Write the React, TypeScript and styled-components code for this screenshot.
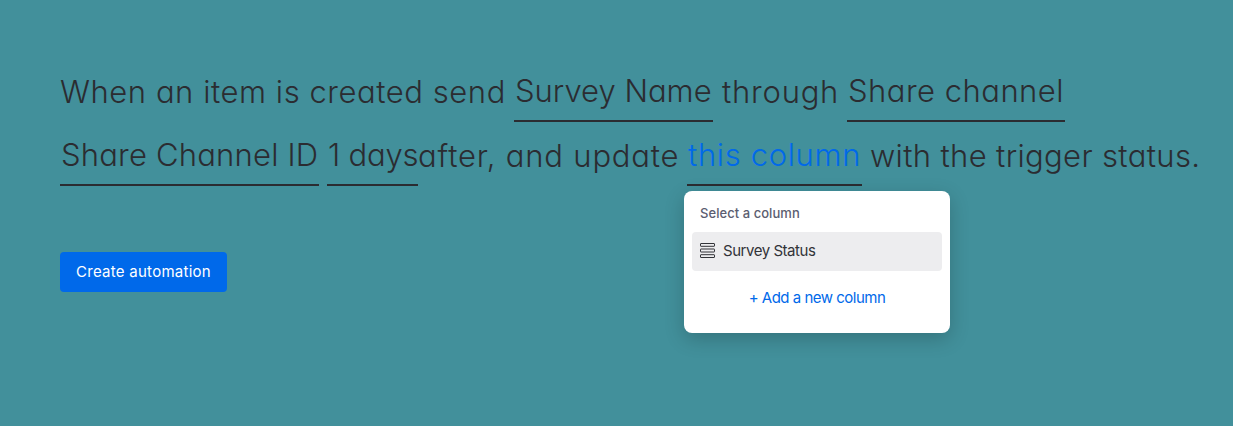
import { ReactNode } from "react";
import styled, { createGlobalStyle } from "styled-components";

const colors = {
  background: "#42909b",
  text: "#323338",
  ink: "#2b2c31",
  secondary: "#5b5d70",
  primary: "#0069ea",
  hover: "#ededef",
};

export default function App() {
  return (
    <>
      <GlobalStyle />
      <Page>
        <Sentence>
          <Line>
            <Words $width={454} $spacing={0.55}>When an item is created send</Words>
            <Field $width={199} $gap={9}>Survey Name</Field>
            <Words $width={125} $spacing={0.78}>through</Words>
            <Field $width={218} $spacing={0.48}>Share channel</Field>
          </Line>
          <Line>
            <Field $width={259} $gap={8} $spacing={0.2}>Share Channel ID</Field>
            <Field $width={91} $spacing={-0.2}>1 days</Field>
            <Words $width={269} $spacing={0.8}>after, and update</Words>
            <ColumnField>
              <Field $width={175} $gap={8} $spacing={0.65} $active>this column</Field>
              <ColumnMenu>
                <MenuItem icon={<StatusIcon />}>Survey Status</MenuItem>
              </ColumnMenu>
            </ColumnField>
            <Words $width={334} $spacing={0.35}>with the trigger status.</Words>
          </Line>
        </Sentence>
        <CreateButton>Create automation</CreateButton>
      </Page>
    </>
  );
}

function ColumnMenu({ children }: { children: ReactNode }) {
  return (
    <Menu>
      <MenuTitle>Select a column</MenuTitle>
      {children}
      <AddColumn>+ Add a new column</AddColumn>
    </Menu>
  );
}

function MenuItem({ icon, children }: { icon: ReactNode; children: ReactNode }) {
  return (
    <Item>
      {icon}
      <span>{children}</span>
    </Item>
  );
}

function StatusIcon() {
  return (
    <svg width="16" height="16" viewBox="0 0 16 16" fill="none" stroke={colors.text}>
      <rect x="0.5" y="0.5" width="14" height="2.8" rx="0.4" />
      <rect x="0.5" y="6" width="14" height="3" rx="0.4" />
      <rect x="0.5" y="11.7" width="14" height="2.8" rx="0.4" />
    </svg>
  );
}

const GlobalStyle = createGlobalStyle`
  * {
    box-sizing: border-box;
  }

  body {
    margin: 0;
    background: ${colors.background};
  }
`;

const Page = styled.main`
  height: 426px;
  padding: 58px 0 0 60px;
  overflow: hidden;

  background: ${colors.background};
  color: ${colors.ink};
`;

const Sentence = styled.div`
  font-family: "Inter", sans-serif;
  font-size: 31px;
  font-weight: 300;
  font-feature-settings: "cv11";
  white-space: nowrap;
`;

const Line = styled.div`
  display: flex;
  height: 64px;
`;

const Words = styled.span<{ $width: number; $spacing?: number }>`
  flex: none;
  width: ${({ $width }) => $width}px;

  letter-spacing: ${({ $spacing = 0 }) => $spacing}px;
  line-height: 68px;
`;

const Field = styled.span<{
  $width: number;
  $gap?: number;
  $spacing?: number;
  $active?: boolean;
}>`
  flex: none;
  display: block;
  width: ${({ $width }) => $width}px;
  height: 64px;
  margin-right: ${({ $gap = 0 }) => $gap}px;
  padding-left: 1px;
  border-bottom: 2px solid ${colors.ink};

  color: ${({ $active }) => ($active ? colors.primary : colors.ink)};
  letter-spacing: ${({ $spacing = 0 }) => $spacing}px;
  line-height: 66px;
`;

const ColumnField = styled.div`
  position: relative;
`;

const Menu = styled.div`
  position: absolute;
  top: 69px;
  left: -3px;
  width: 266px;
  height: 142px;
  padding: 12px 8px;
  border-radius: 8px;

  background: white;
  box-shadow: 0 6px 20px rgba(0, 0, 0, 0.2);

  font-family: "Inter", sans-serif;
  font-feature-settings: normal;
  font-weight: 400;
`;

const MenuTitle = styled.div`
  padding: 0 8px;
  margin-bottom: 9px;

  color: ${colors.secondary};
  font-size: 13px;
  font-weight: 500;
  letter-spacing: 0.05px;
  line-height: 20px;
`;

const Item = styled.div`
  display: flex;
  align-items: center;
  gap: 7px;
  height: 39px;
  padding: 0 8px 2px;
  border-radius: 4px;

  background: ${colors.hover};
  color: ${colors.text};
  font-size: 15px;
  letter-spacing: -0.46px;
  line-height: 22px;
`;

const AddColumn = styled.div`
  margin-top: 16px;

  color: ${colors.primary};
  font-size: 15px;
  letter-spacing: -0.5px;
  line-height: 22px;
  text-align: center;
`;

const CreateButton = styled.button`
  display: block;
  width: 167px;
  height: 40px;
  margin-top: 66px;
  padding: 0 0 1px;
  border: none;
  border-radius: 4px;

  background: ${colors.primary};
  color: white;
  font-family: "Inter", sans-serif;
  font-size: 15px;
  letter-spacing: 0.26px;
`;
